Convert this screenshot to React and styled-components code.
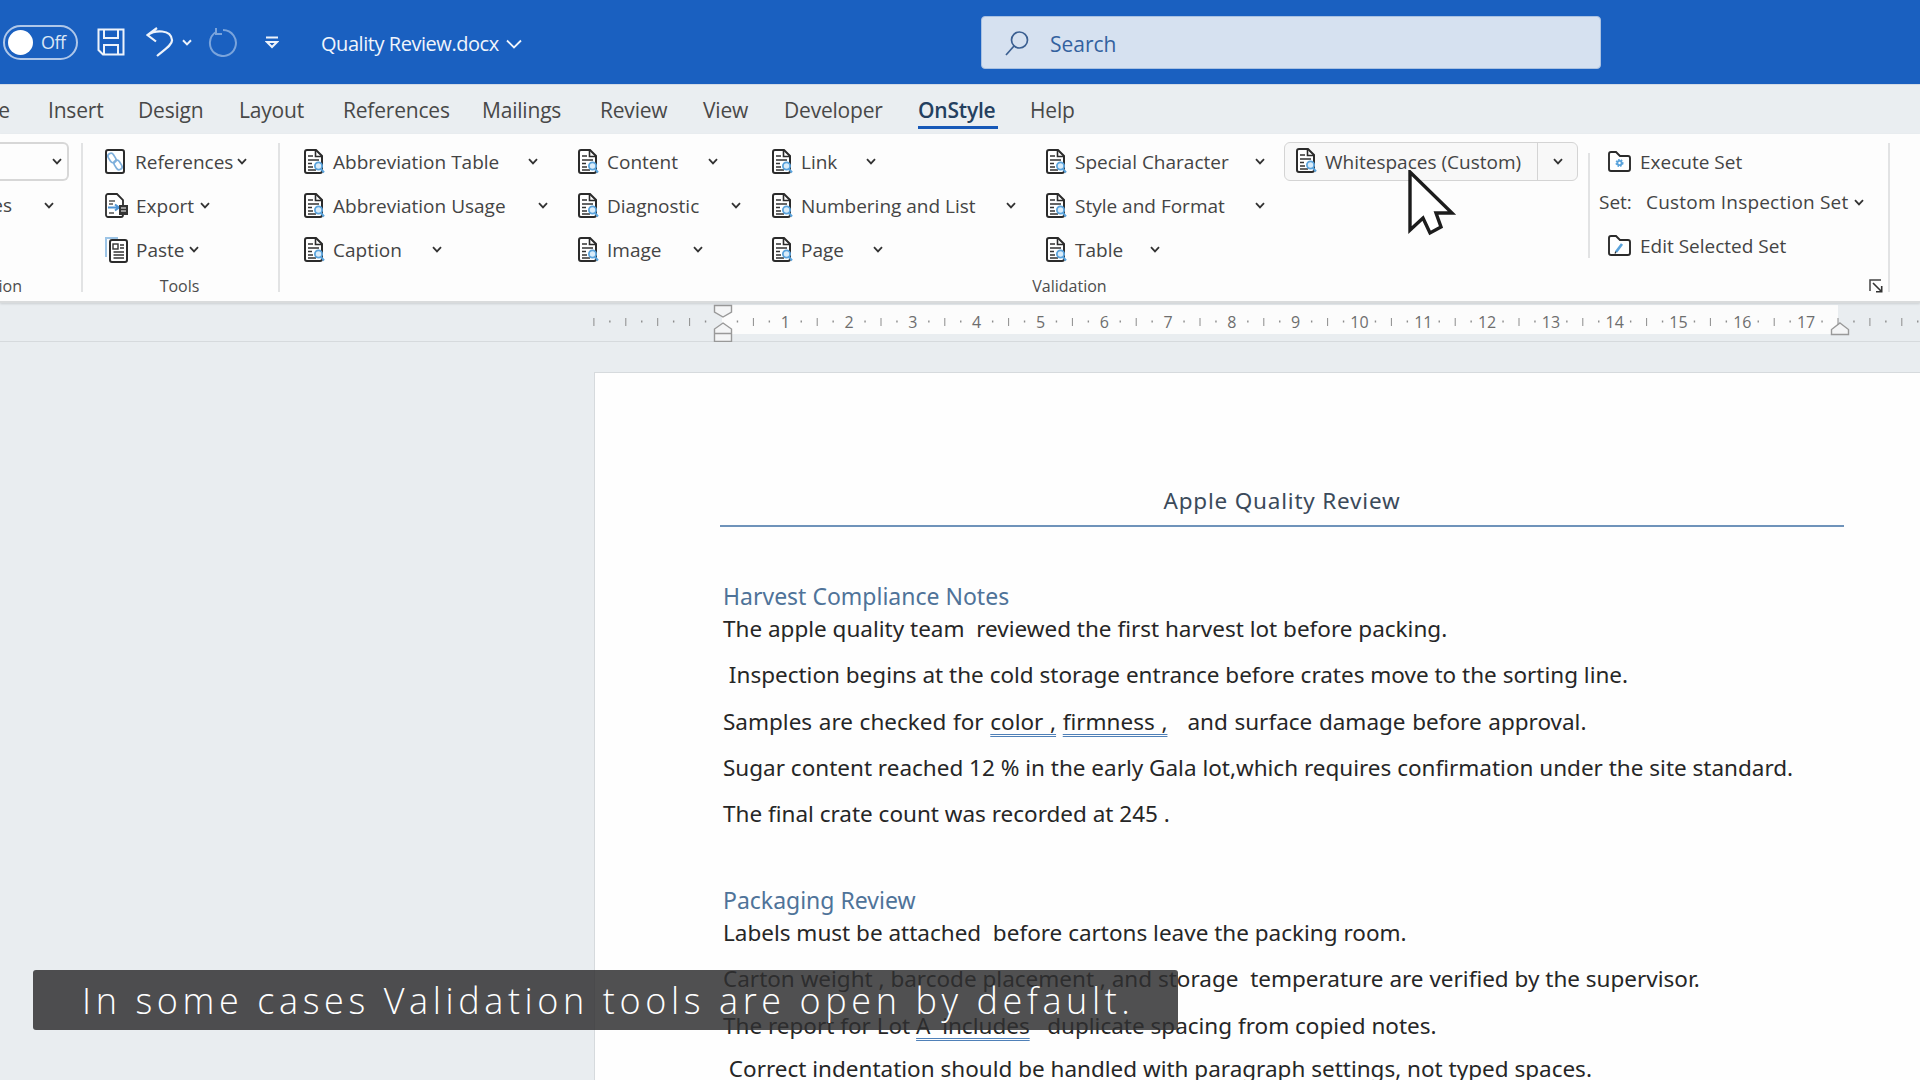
import React from "react";
import styled, { createGlobalStyle } from "styled-components";

const Global = createGlobalStyle`
  html, body { margin: 0; padding: 0; background: #e9edf0; }
  * { box-sizing: border-box; }
`;

const UI = `"Open Sans", "Noto Sans", sans-serif`;
const DOC = `"Noto Sans", "Open Sans", sans-serif`;

const Screen = styled.div`
  position: relative;
  width: 1920px;
  height: 1080px;
  overflow: hidden;
  display: flex;
  flex-direction: column;
  font-family: ${UI};
  background: #e9edf0;
`;

/* ---------- title bar ---------- */
const TitleBar = styled.header`
  height: 84px;
  flex: none;
  display: flex;
  align-items: center;
  background: #1a60c0;
  color: #fff;
`;
const Toggle = styled.div`
  width: 75px;
  height: 35px;
  margin-left: 3px;
  border: 2px solid rgba(255, 255, 255, 0.65);
  border-radius: 18px;
  display: flex;
  align-items: center;
  padding-left: 3px;
  gap: 8px;
  font-size: 18px;
  letter-spacing: -0.5px;
  color: #dbe6f6;
`;
const Knob = styled.span`
  width: 25px;
  height: 25px;
  border-radius: 50%;
  background: #fff;
`;
const Qat = styled.svg`
  flex: none;
  margin-left: ${(p) => p.$ml}px;
  fill: none;
  stroke: ${(p) => p.$stroke || "#eef3fb"};
  stroke-width: ${(p) => p.$sw || 2};
`;
const DocName = styled.div`
  margin-left: ${(p) => p.$ml}px;
  width: 201px;
  padding-top: 3px;
  display: flex;
  align-items: center;
  justify-content: space-between;
  font-size: 20px;
  letter-spacing: -0.45px;
  color: #f0f5fc;
`;
const SearchBox = styled.div`
  width: 620px;
  height: 53px;
  margin-left: 459px;
  margin-top: 1px;
  border-radius: 4px;
  background: #d6e1f0;
  border: 1px solid #a9c1e2;
  display: flex;
  align-items: center;
  padding-left: 22px;
  gap: 20px;
  font-size: 21px;
  color: #33619f;
`;
const SearchLabel = styled.span`
  padding-top: 2px;
`;

/* ---------- tabs ---------- */
const TabBar = styled.nav`
  height: 50px;
  flex: none;
  display: flex;
  background: #eaeef1;
  border-top: 1px solid #d3dbe6;
`;
const ClippedTab = styled.div`
  width: 10px;
  margin-right: 38px;
  display: flex;
  justify-content: flex-end;
  align-items: center;
  overflow: hidden;
  font-size: 21px;
  color: #484848;
  height: 50px;
`;
const Tab = styled.div`
  position: relative;
  width: ${(p) => p.$w}px;
  height: 50px;
  display: flex;
  align-items: center;
  font-size: 21px;
  letter-spacing: -0.2px;
  font-weight: ${(p) => (p.$active ? 600 : 400)};
  color: ${(p) => (p.$active ? "#24405f" : "#484848")};
`;
const TabLine = styled.span`
  position: absolute;
  left: 0;
  top: 41px;
  width: 80px;
  height: 3px;
  background: #1658b8;
`;

/* ---------- ribbon ---------- */
const Ribbon = styled.section`
  position: relative;
  z-index: 2;
  height: 169px;
  flex: none;
  display: flex;
  background: #fdfdfd;
  border-bottom: 2px solid #d9dbdc;
  box-shadow: 0 1px 2px rgba(0, 0, 0, 0.12);
  padding-top: 5px;
  color: #444;
  font-size: 19px;
`;
const Group = styled.div`
  width: ${(p) => p.$w}px;
  flex: none;
  display: flex;
  flex-direction: column;
  padding-left: ${(p) => p.$pl || 0}px;
`;
const GroupBody = styled.div`
  height: 132px;
  display: grid;
  grid-template-columns: ${(p) => p.$cols};
  grid-template-rows: repeat(3, 44px);
  grid-auto-flow: column;
  align-items: center;
`;
const GroupLabel = styled.div`
  height: 29px;
  display: flex;
  align-items: center;
  justify-content: ${(p) => p.$justify || "center"};
  margin-left: ${(p) => p.$ml || 0}px;
  padding-right: ${(p) => p.$pr || 0}px;
  font-size: 16px;
  color: #4c4c4c;
  overflow: hidden;
`;
const Sep = styled.div`
  flex: none;
  width: 2px;
  height: ${(p) => (p.$short ? 105 : 149)}px;
  margin-top: ${(p) => (p.$short ? 14 : 4)}px;
  background: #e2e3e4;
`;
const Item = styled.div`
  width: ${(p) => p.$w}px;
  display: flex;
  align-items: center;
  padding-top: 1px;
`;
const ItemText = styled.span`
  flex: 1;
  margin-left: ${(p) => p.$ml || 7}px;
  padding-top: 1px;
  white-space: nowrap;
`;
const Chev = styled.svg`
  flex: none;
  fill: none;
  stroke: #333;
  stroke-width: 1.8;
`;
const ClipField = styled.div`
  width: 69px;
  height: 39px;
  border: 2px solid #d7d7d7;
  border-left: 0;
  border-radius: 0 6px 6px 0;
  display: flex;
  align-items: center;
  justify-content: flex-end;
  padding-right: 5px;
`;
const ClipRow = styled.div`
  width: 54px;
  display: flex;
  align-items: center;
  justify-content: space-between;
  overflow: hidden;
`;
const ClipText = styled.span`
  display: block;
  width: ${(p) => p.$w}px;
  overflow: hidden;
  direction: rtl;
  white-space: nowrap;
`;
const SplitButton = styled.div`
  width: 294px;
  height: 39px;
  display: flex;
  align-items: center;
  border: 1px solid #d4d4d4;
  border-radius: 6px;
  background: #f8f8f8;
`;
const SplitMain = styled.div`
  width: 253px;
  height: 100%;
  display: flex;
  align-items: center;
  padding-left: 10px;
  border-right: 1px solid #d4d4d4;
`;
const SplitArrow = styled.div`
  flex: 1;
  display: flex;
  justify-content: center;
`;
const SetColumn = styled.div`
  height: 132px;
  display: flex;
  flex-direction: column;
`;
const SetRow = styled.div`
  height: ${(p) => p.$h}px;
  padding-left: ${(p) => p.$pl}px;
  display: flex;
  align-items: center;
`;
const SetLabel = styled.span`
  width: 47px;
`;
const SetValue = styled.span`
  width: 208px;
  white-space: nowrap;
  letter-spacing: 0.2px;
`;

/* ---------- ruler ---------- */
const RulerBand = styled.div`
  position: relative;
  height: 39px;
  flex: none;
  background: #e9edf0;
  border-bottom: 1px solid #d6dadd;
  padding-top: 2px;
`;
const RulerPaper = styled.div`
  width: 1116px;
  height: 29px;
  margin-left: 722px;
  background: #fcfcfc;
`;
const RulerArt = styled.svg`
  position: absolute;
  left: 0;
  top: 0;
  font-family: ${UI};
`;

/* ---------- document ---------- */
const Canvas = styled.main`
  flex: 1;
  display: flex;
  padding: 30px 0 0 594px;
  background: #e9edf0;
  overflow: hidden;
`;
const Page = styled.article`
  flex: 1;
  background: #fefefe;
  border-top: 1px solid #d6dadd;
  border-left: 1px solid #d6dadd;
  padding: 113px 0 0 125px;
  font-family: ${DOC};
  font-size: 22.5px;
  line-height: 30px;
  color: #262626;
  white-space: pre;
`;
const DocTitle = styled.h1`
  width: 1124px;
  margin: 0;
  padding-bottom: 9px;
  border-bottom: 2px solid #6f93ba;
  text-align: center;
  font-size: 22.5px;
  font-weight: 400;
  line-height: 30px;
  letter-spacing: 0.8px;
  color: #3b4a5a;
`;
const Heading = styled.h2`
  margin: ${(p) => p.$mt}px 0 3px 3px;
  font-size: 23px;
  font-weight: 400;
  line-height: 30px;
  color: #4f7399;
`;
const Para = styled.p`
  margin: 0 0 ${(p) => p.$mb ?? 16.3}px 3px;
  word-spacing: ${(p) => p.$ws || 0}px;
`;
const Flagged = styled.span`
  text-decoration: underline double #4f80b8;
  text-decoration-thickness: 1px;
  text-underline-offset: 4px;
`;

/* ---------- overlays ---------- */
const Caption = styled.div`
  position: absolute;
  z-index: 5;
  left: 33px;
  top: 970px;
  width: 1145px;
  height: 60px;
  padding-left: 49px;
  display: flex;
  align-items: center;
  background: rgba(46, 46, 48, 0.84);
  border-radius: 3px;
  font-size: 36px;
  font-weight: 300;
  letter-spacing: 4.6px;
  color: #fff;
  white-space: nowrap;
`;
const Cursor = styled.svg`
  position: absolute;
  z-index: 6;
  left: 1405px;
  top: 170px;
`;

/* ---------- icons ---------- */
const ChevronDown = ({ w = 10 }) => (
  <Chev width={w} height="7" viewBox="0 0 10 7">
    <path d="M1 1.2 5 5.4 9 1.2" />
  </Chev>
);

const sheet = "M4 1H13L19 7V22A2 2 0 0 1 17 24H4A2 2 0 0 1 2 22V3A2 2 0 0 1 4 1Z";

const DocIcon = () => (
  <svg width="23" height="26" viewBox="0 0 23 26" fill="none" style={{ flex: "none" }}>
    <path d={sheet} stroke="#2b2b2b" strokeWidth="2" fill="#fff" />
    <path d="M12.5 1.5V7.5H19" stroke="#2b2b2b" strokeWidth="1.6" />
    <path d="M5 7H10M5 11H16M5 14.5H9M5 18H10M5 21H13" stroke="#333" strokeWidth="1.7" />
    <circle cx="15.5" cy="17" r="3.6" stroke="#5aa3dc" strokeWidth="1.8" fill="#d9ecfa" />
    <path d="M18 20 21 23.5" stroke="#5aa3dc" strokeWidth="2" />
  </svg>
);

const LinkDocIcon = () => (
  <svg width="23" height="26" viewBox="0 0 23 26" fill="none" style={{ flex: "none" }}>
    <rect x="2" y="1" width="18" height="23" rx="2" stroke="#2b2b2b" strokeWidth="2" fill="#fff" />
    <rect x="5" y="4" width="6" height="10" rx="3" transform="rotate(-32 8 9)" stroke="#7fb0dc" strokeWidth="1.7" />
    <rect x="11" y="11" width="6" height="10" rx="3" transform="rotate(-32 14 16)" stroke="#7fb0dc" strokeWidth="1.7" />
  </svg>
);

const ExportIcon = () => (
  <svg width="25" height="26" viewBox="0 0 25 26" fill="none" style={{ flex: "none" }}>
    <path d={sheet} stroke="#2b2b2b" strokeWidth="1.8" fill="#fff" />
    <path d="M5 8H11M5 11H9M5 20H10" stroke="#555" strokeWidth="1.4" />
    <path d="M4 14.5H14M11 11.5 15 14.5 11 17.5" stroke="#4f94d4" strokeWidth="2" />
    <rect x="15" y="12" width="9" height="10" fill="#333" />
    <path d="M17 15H22M17 18H22" stroke="#fff" strokeWidth="1.2" />
  </svg>
);

const PasteIcon = () => (
  <svg width="25" height="27" viewBox="0 0 25 27" fill="none" style={{ flex: "none" }}>
    <path d="M2 21V2H14" stroke="#9cc4e6" strokeWidth="2" />
    <rect x="6" y="4" width="17" height="22" rx="2" stroke="#2b2b2b" strokeWidth="2" fill="#fff" />
    <rect x="9" y="8" width="5" height="5" stroke="#333" strokeWidth="1.4" />
    <path d="M16 9H20M16 12H20M9.5 16H20M9.5 19H20M9.5 22H20" stroke="#333" strokeWidth="1.4" />
  </svg>
);

const folder = "M2 4A2 2 0 0 1 4 2H9L13 6H21A2 2 0 0 1 23 8V19A2 2 0 0 1 21 21H4A2 2 0 0 1 2 19Z";

const FolderGearIcon = () => (
  <svg width="25" height="23" viewBox="0 0 25 23" fill="none" style={{ flex: "none" }}>
    <path d={folder} stroke="#2b2b2b" strokeWidth="1.9" fill="#fff" />
    <circle cx="12.5" cy="13" r="3" fill="#5aa3dc" stroke="#5aa3dc" strokeWidth="2" strokeDasharray="1.5 1" />
    <circle cx="12.5" cy="13" r="1.2" fill="#fff" />
  </svg>
);

const FolderPenIcon = () => (
  <svg width="25" height="23" viewBox="0 0 25 23" fill="none" style={{ flex: "none" }}>
    <path d={folder} stroke="#2b2b2b" strokeWidth="1.9" fill="#fff" />
    <path d="M9 18 15 10" stroke="#5aa3dc" strokeWidth="2.6" />
    <path d="M8 19.5 9 17.5" stroke="#333" strokeWidth="1.2" />
  </svg>
);

const Launcher = () => (
  <svg width="14" height="14" viewBox="0 0 14 14" fill="none" style={{ flex: "none" }}>
    <path d="M1 12V1H12" stroke="#444" strokeWidth="1.5" />
    <path d="M4 4 12.5 12.5M7 12.7H12.7V7" stroke="#333" strokeWidth="1.6" />
  </svg>
);

/* ---------- ruler drawing ---------- */
const START = 721.5;
const UNIT = 63.8;
const ticks = [];
for (let q = -8; q <= 200; q++) {
  const x = START + (q * UNIT) / 4;
  if (x > 1920) break;
  const mod = ((q % 4) + 4) % 4;
  if (q === 0) continue;
  if (mod === 0 && q > 0 && q / 4 <= 17) continue;
  const big = mod === 2 || mod === 0;
  ticks.push({ x, big });
}
const numbers = Array.from({ length: 17 }, (_, i) => i + 1);

const RulerDrawing = () => (
  <RulerArt width="1920" height="39" viewBox="0 0 1920 39">
    {ticks.map((t) =>
      t.big ? (
        <rect key={t.x} x={t.x - 0.5} y="15" width="1" height="8" fill="#8c8c8c" />
      ) : (
        <rect key={t.x} x={t.x - 0.7} y="17.5" width="1.4" height="2" fill="#8c8c8c" />
      )
    )}
    {numbers.map((n) => (
      <text key={n} x={START + n * UNIT} y="25" textAnchor="middle" fontSize="16" fill="#6e6e6e">
        {n}
      </text>
    ))}
    <path d="M714.5 2.5H731.5V9L723 14 714.5 9Z" fill="#f4f5f6" stroke="#999" strokeWidth="1.4" />
    <path d="M723 20 731.5 26V38.5H714.5V26Z M714.5 30.5H731.5" fill="#f4f5f6" stroke="#999" strokeWidth="1.4" />
    <path d="M1840 20 1848.5 26.5V31.5H1831.5V26.5Z" fill="#f4f5f6" stroke="#999" strokeWidth="1.4" />
  </RulerArt>
);

const tabs = [
  ["Insert", 90],
  ["Design", 101],
  ["Layout", 104],
  ["References", 139],
  ["Mailings", 118],
  ["Review", 103],
  ["View", 81],
  ["Developer", 134],
  ["OnStyle", 112, true],
  ["Help", 60],
];

const validation = [
  ["Abbreviation Table", 235],
  ["Abbreviation Usage", 245],
  ["Caption", 139],
  ["Content", 141],
  ["Diagnostic", 164],
  ["Image", 126],
  ["Link", 105],
  ["Numbering and List", 245],
  ["Page", 112],
  ["Special Character", 220],
  ["Style and Format", 220],
  ["Table", 115],
];

export default function App() {
  return (
    <Screen>
      <Global />
      <TitleBar>
        <Toggle>
          <Knob />
          Off
        </Toggle>
        <Qat $ml={19} width="28" height="28" viewBox="0 0 28 28">
          <path d="M1.5 1.5H26.5V26.5H6L1.5 22Z" />
          <path d="M7 2V10H21V2M7 26V17H21V26" />
        </Qat>
        <Qat $ml={21} width="28" height="30" viewBox="0 0 28 30" $sw={2.2}>
          <path d="M11 1 1.5 8 10 14.5M1.5 8C9 3 25 2 26 13 26.5 18 18 23 11 29" />
        </Qat>
        <Qat $ml={8} width="10" height="7" viewBox="0 0 10 7">
          <path d="M1 1.2 5 5.4 9 1.2" />
        </Qat>
        <Qat $ml={16} width="30" height="30" viewBox="0 0 30 30" $stroke="#7aa4dc">
          <path d="M8 5A13 13 0 1 0 15 3M8 1V7H14" />
        </Qat>
        <Qat $ml={27} width="14" height="13" viewBox="0 0 14 13">
          <path d="M1 1.5H13M2 6 7 11 12 6Z" />
        </Qat>
        <DocName $ml={42}>
          Quality Review.docx
          <Chev width="16" height="10" viewBox="0 0 16 10" style={{ stroke: "#f0f5fc" }}>
            <path d="M1 1.5 8 8.5 15 1.5" />
          </Chev>
        </DocName>
        <SearchBox>
          <svg width="26" height="26" viewBox="0 0 26 26" fill="none" stroke="#3b5f91" strokeWidth="1.7">
            <circle cx="15.5" cy="10" r="8" />
            <path d="M10 16 2 25" />
          </svg>
          <SearchLabel>Search</SearchLabel>
        </SearchBox>
      </TitleBar>

      <TabBar>
        <ClippedTab>Home</ClippedTab>
        {tabs.map(([name, w, active]) => (
          <Tab key={name} $w={w} $active={active}>
            {name}
            {active && <TabLine />}
          </Tab>
        ))}
      </TabBar>

      <Ribbon>
        <Group $w={81}>
          <GroupBody $cols="81px">
            <ClipField>
              <ChevronDown />
            </ClipField>
            <ClipRow>
              <ClipText $w={12}>Rules</ClipText>
              <ChevronDown />
            </ClipRow>
            <span />
          </GroupBody>
          <GroupLabel $justify="flex-end" style={{ width: 22 }}>
            <ClipText $w={22}>Inspection</ClipText>
          </GroupLabel>
        </Group>
        <Sep />
        <Group $w={195} $pl={21}>
          <GroupBody $cols="1fr">
            <Item $w={143}>
              <LinkDocIcon />
              <ItemText $ml={8}>References</ItemText>
              <ChevronDown />
            </Item>
            <Item $w={106}>
              <ExportIcon />
              <ItemText>Export</ItemText>
              <ChevronDown />
            </Item>
            <Item $w={95}>
              <PasteIcon />
              <ItemText>Paste</ItemText>
              <ChevronDown />
            </Item>
          </GroupBody>
          <GroupLabel $ml={-23}>Tools</GroupLabel>
        </Group>
        <Sep />
        <Group $w={1308} $pl={23}>
          <GroupBody $cols="274px 194px 274px 239px 1fr">
            {validation.map(([name, w]) => (
              <Item key={name} $w={w}>
                <DocIcon />
                <ItemText>{name}</ItemText>
                <ChevronDown />
              </Item>
            ))}
            <SplitButton>
              <SplitMain>
                <DocIcon />
                <ItemText>Whitespaces (Custom)</ItemText>
              </SplitMain>
              <SplitArrow>
                <ChevronDown />
              </SplitArrow>
            </SplitButton>
          </GroupBody>
          <GroupLabel $ml={248}>Validation</GroupLabel>
        </Group>
        <Sep $short />
        <Group $w={298}>
          <SetColumn>
            <SetRow $h={45} $pl={17}>
              <FolderGearIcon />
              <ItemText $ml={8}>Execute Set</ItemText>
            </SetRow>
            <SetRow $h={36} $pl={9}>
              <SetLabel>Set:</SetLabel>
              <SetValue>Custom Inspection Set</SetValue>
              <ChevronDown />
            </SetRow>
            <SetRow $h={51} $pl={17}>
              <FolderPenIcon />
              <ItemText $ml={8}>Edit Selected Set</ItemText>
            </SetRow>
          </SetColumn>
          <GroupLabel $justify="flex-end" $pr={5}>
            <Launcher />
          </GroupLabel>
        </Group>
        <Sep />
      </Ribbon>

      <RulerBand>
        <RulerPaper />
        <RulerDrawing />
      </RulerBand>

      <Canvas>
        <Page>
          <DocTitle>Apple Quality Review</DocTitle>
          <Heading $mt={54}>Harvest Compliance Notes</Heading>
          <Para>The apple quality team  reviewed the first harvest lot before packing.</Para>
          <Para> Inspection begins at the cold storage entrance before crates move to the sorting line.</Para>
          <Para $ws={0.8}>
            Samples are checked for <Flagged>color ,</Flagged> <Flagged>firmness ,</Flagged>
            {"   and surface damage before approval."}
          </Para>
          <Para>Sugar content reached 12 % in the early Gala lot,which requires confirmation under the site standard.</Para>
          <Para>The final crate count was recorded at 245 .</Para>
          <Heading $mt={56}>Packaging Review</Heading>
          <Para>Labels must be attached  before cartons leave the packing room.</Para>
          <Para>Carton weight , barcode placement , and storage  temperature are verified by the supervisor.</Para>
          <Para $mb={13}>
            The report for Lot <Flagged>A  includes</Flagged>
            {"   duplicate spacing from copied notes."}
          </Para>
          <Para> Correct indentation should be handled with paragraph settings, not typed spaces.</Para>
        </Page>
      </Canvas>

      <Caption>In some cases Validation tools are open by default.</Caption>
      <Cursor width="54" height="72" viewBox="0 0 54 72">
        <path
          d="M5 2V60L18 48 25 63 36 57 31 43H47Z"
          fill="#fff"
          stroke="#1c1c1c"
          strokeWidth="3.4"
          strokeLinejoin="miter"
        />
      </Cursor>
    </Screen>
  );
}
